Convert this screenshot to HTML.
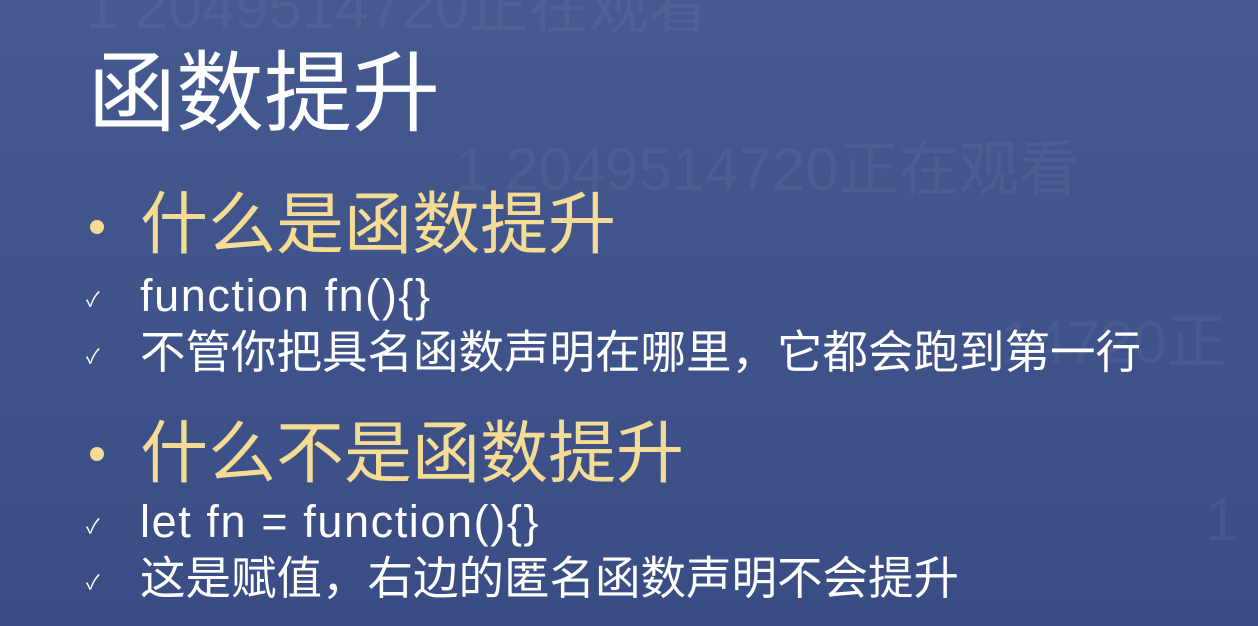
<!DOCTYPE html>
<html><head><meta charset="utf-8"><style>
body{margin:0;width:1258px;height:626px;overflow:hidden;background:linear-gradient(#455a90,#3a4c84);font-family:"Liberation Sans","Noto Sans CJK SC",sans-serif;position:relative}
div{position:absolute;white-space:nowrap;line-height:1}
.w{color:rgba(255,255,255,0.05);font-size:60px}
.y{color:#f4dc95;font-size:68px}
.t{color:#fff;font-size:44px}
.c{color:#fff;font-size:20px;left:86px}
.dot{width:14px;height:14px;border-radius:50%;background:#f4dc95;left:90px}
</style></head><body>
<div class="w" style="left:85px;top:-22px">1 2049514720正在观看</div>
<div class="w" style="left:455px;top:140px">1 2049514720正在观看</div>
<div class="w" style="left:1000px;top:313px">14720正</div>
<div class="w" style="left:1205px;top:490px">1 2</div>
<div style="left:88px;top:50px;color:#fff;font-size:88px">函数提升</div>
<div class="dot" style="top:220px"></div>
<div class="y" style="left:140px;top:191px">什么是函数提升</div>
<div class="c" style="top:290px">✓</div>
<div class="t" style="left:140px;top:273px;font-size:45px;letter-spacing:1.6px">function fn(){}</div>
<div class="c" style="top:347px">✓</div>
<div class="t" style="left:140px;top:330px;font-size:45.5px">不管你把具名函数声明在哪里，它都会跑到第一行</div>
<div class="dot" style="top:447px"></div>
<div class="y" style="left:140px;top:420px">什么不是函数提升</div>
<div class="c" style="top:517px">✓</div>
<div class="t" style="left:140px;top:499px;font-size:45px;letter-spacing:1.6px">let fn = function(){}</div>
<div class="c" style="top:573px">✓</div>
<div class="t" style="left:140px;top:556px;font-size:45.5px">这是赋值，右边的匿名函数声明不会提升</div>
</body></html>
